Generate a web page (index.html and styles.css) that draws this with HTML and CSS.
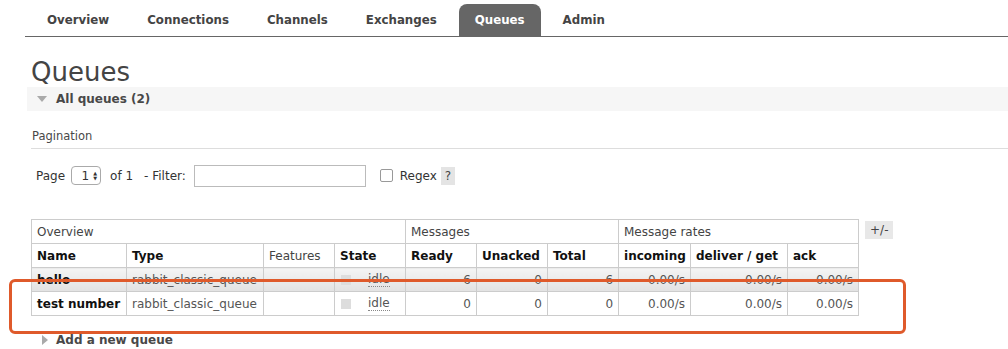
FILE: index.html
```html
<!DOCTYPE html>
<html lang="en">
<head>
    <meta charset="UTF-8">
    <title>RabbitMQ Management - Queues</title>
    <link rel="stylesheet" href="styles.css">
</head>
<body>
    <div class="page">
        <ul class="tabs">
            <li>Overview</li>
            <li>Connections</li>
            <li>Channels</li>
            <li>Exchanges</li>
            <li class="active">Queues</li>
            <li>Admin</li>
        </ul>

        <h1>Queues</h1>
        <div class="section-bar"><span class="arrow-down"></span>All queues (2)</div>

        <h3 class="pagination-title">Pagination</h3>
        <div class="filter-row">
            <span>Page</span>
            <span class="select">1 <span class="updown">&#9650;<br>&#9660;</span></span>
            <span class="of">of 1</span>
            <span>- Filter:</span>
            <span class="text-input"></span>
            <span class="checkbox"></span>
            <span>Regex</span>
            <span class="help">?</span>
        </div>

        <div class="table-row">
            <table class="list">
                <colgroup>
                    <col style="width:95px">
                    <col style="width:137px">
                    <col style="width:71px">
                    <col style="width:71px">
                    <col style="width:71px">
                    <col style="width:71px">
                    <col style="width:71px">
                    <col style="width:72px">
                    <col style="width:97px">
                    <col style="width:71px">
                </colgroup>
                <tr class="group">
                    <th colspan="4">Overview</th>
                    <th colspan="3">Messages</th>
                    <th colspan="3">Message rates</th>
                </tr>
                <tr class="head">
                    <th>Name</th>
                    <th>Type</th>
                    <th class="plain">Features</th>
                    <th>State</th>
                    <th>Ready</th>
                    <th>Unacked</th>
                    <th>Total</th>
                    <th>incoming</th>
                    <th>deliver / get</th>
                    <th>ack</th>
                </tr>
                <tr class="hover">
                    <td class="name">hello</td>
                    <td>rabbit_classic_queue</td>
                    <td></td>
                    <td><span class="state"><span class="dot"></span><abbr>idle</abbr></span></td>
                    <td class="num">6</td>
                    <td class="num">0</td>
                    <td class="num">6</td>
                    <td class="num">0.00/s</td>
                    <td class="num">0.00/s</td>
                    <td class="num">0.00/s</td>
                </tr>
                <tr>
                    <td class="name">test number</td>
                    <td>rabbit_classic_queue</td>
                    <td></td>
                    <td><span class="state"><span class="dot"></span><abbr>idle</abbr></span></td>
                    <td class="num">0</td>
                    <td class="num">0</td>
                    <td class="num">0</td>
                    <td class="num">0.00/s</td>
                    <td class="num">0.00/s</td>
                    <td class="num">0.00/s</td>
                </tr>
            </table>
            <span class="toggle">+/-</span>
        </div>

        <div class="add-queue"><span class="arrow-right"></span>Add a new queue</div>
    </div>

    <!-- annotation drawn over the screenshot -->
    <div class="marker"></div>
</body>
</html>
```

FILE: styles.css
```css
body {
    margin: 0;
    font-family: "DejaVu Sans", Verdana, sans-serif;
    font-size: 12px;
    color: #484848;
    background: #fff;
    overflow: hidden;
}

.page {
    padding-top: 4px;
}

/* top navigation */
.tabs {
    list-style: none;
    margin: 0 0 0 25px;
    padding: 0 0 0 6px;
    display: flex;
    gap: 6px;
    border-bottom: 1px solid #666;
    height: 32px;
}

.tabs li {
    padding: 0 16px;
    line-height: 32px;
    font-weight: bold;
    font-size: 11.8px;
    color: #444;
    border-radius: 8px 8px 0 0;
}

.tabs li.active {
    background: #666;
    color: #fff;
}

h1 {
    margin: 20px 0 0 31px;
    font-size: 26px;
    font-weight: normal;
    line-height: 30px;
    color: #444;
}

.section-bar {
    margin: 0 0 0 27px;
    height: 24px;
    line-height: 24px;
    background: #f6f6f6;
    font-weight: bold;
    font-size: 12px;
    color: #484848;
    display: flex;
    align-items: center;
}

.arrow-down {
    width: 0;
    height: 0;
    border-left: 5px solid transparent;
    border-right: 5px solid transparent;
    border-top: 6px solid #aaa;
    margin: 0 9px 0 10px;
}

.arrow-right {
    width: 0;
    height: 0;
    border-top: 5px solid transparent;
    border-bottom: 5px solid transparent;
    border-left: 6px solid #aaa;
    margin: 0 8px 0 0;
}

.pagination-title {
    margin: 18px 0 0 31px;
    padding: 0 0 5px 1px;
    font-size: 11.5px;
    font-weight: normal;
    color: #484848;
    border-bottom: 1px solid #ddd;
}

.filter-row {
    margin: 15px 0 0 36px;
    display: flex;
    align-items: center;
    height: 23px;
    font-size: 12px;
    color: #333;
}

.select {
    margin-left: 6px;
    width: 30px;
    height: 19px;
    border: 1px solid #aaa;
    border-radius: 4px;
    box-sizing: border-box;
    display: flex;
    align-items: center;
    justify-content: flex-end;
    gap: 4px;
    padding-right: 3px;
    font-size: 12px;
}

.updown {
    font-size: 5px;
    line-height: 5px;
    color: #333;
}

.of {
    margin: 0 11px 0 9px;
}

.text-input {
    margin-left: 8px;
    width: 172px;
    height: 22px;
    border: 1px solid #bbb;
    box-sizing: border-box;
}

.checkbox {
    margin: 0 7px 0 14px;
    width: 11px;
    height: 11px;
    border: 1px solid #999;
    border-radius: 2px;
}

.help {
    margin-left: 4px;
    background: #e4e4e4;
    padding: 2px 4px;
    color: #444;
}

/* queue table */
.table-row {
    margin: 32px 0 0 31px;
    display: flex;
    align-items: flex-start;
    gap: 6px;
}

table.list {
    border-collapse: collapse;
    table-layout: fixed;
    width: 827px;
    font-size: 12px;
}

table.list th,
table.list td {
    border: 1px solid #ccc;
    padding: 0 5px;
    height: 23px;
    text-align: left;
    white-space: nowrap;
    overflow: hidden;
}

tr.group th {
    font-weight: normal;
    color: #444;
}

tr.head th {
    font-weight: bold;
    color: #111;
}

tr.head th.plain {
    font-weight: normal;
    color: #444;
}

table.list td {
    color: #555;
}

table.list td.name {
    font-weight: bold;
    color: #111;
}

table.list td.num {
    text-align: right;
}

tr.hover td {
    background: linear-gradient(#f4f4f4, #e2e2e2);
}

.state {
    display: flex;
    align-items: center;
}

.dot {
    width: 10px;
    height: 10px;
    background: #ddd;
    margin: 0 17px 0 1px;
}

abbr {
    text-decoration: none;
    border-bottom: 1px dotted #888;
    line-height: 14px;
}

.toggle {
    margin-top: 2px;
    background: #e8e8e8;
    padding: 2px 5px;
    font-size: 12px;
    color: #444;
}

.add-queue {
    margin: 17px 0 0 42px;
    display: flex;
    align-items: center;
    font-weight: bold;
    font-size: 12px;
    color: #484848;
}

.marker {
    position: absolute;
    left: 9px;
    top: 279px;
    width: 891px;
    height: 49px;
    border: 3px solid #df5a2b;
    border-radius: 6px;
}
```
